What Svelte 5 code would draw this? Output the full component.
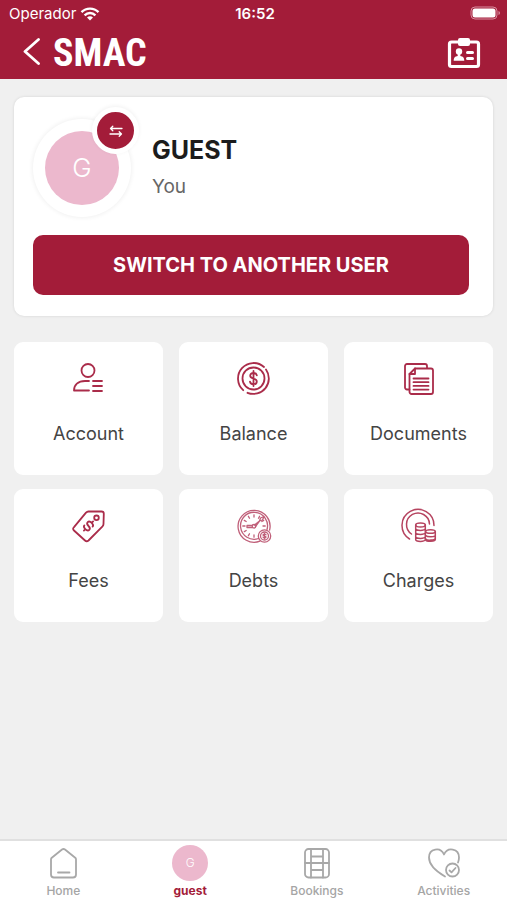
<script lang="ts">
    let user = { name: 'GUEST', relation: 'You', initial: 'G' };

    const options = ['Account', 'Balance', 'Documents', 'Fees', 'Debts', 'Charges'];

    const tabs = [
        { id: 'home', label: 'Home' },
        { id: 'user', label: 'guest' },
        { id: 'bookings', label: 'Bookings' },
        { id: 'activities', label: 'Activities' }
    ];

    let activeTab = 'user';

    // clock hour marks for the debts icon
    const marks = [0, 30, 60, 90, 180, 210, 240, 270, 300, 330];
</script>

<div class="screen">
    <header>
        <div class="status">
            <div class="carrier">
                <span>Operador</span>
                <svg width="20" height="14" viewBox="0 0 20 14" fill="none" stroke="#fff" stroke-width="2.4">
                    <path d="M1.5 5.2C6.3.4 13.7.4 18.5 5.2"/>
                    <path d="M4.6 8.3c3.1-3 7.7-3 10.8 0"/>
                    <path d="M7 10.4c1.8-1.6 4.2-1.6 6 0L10 13.6z" fill="#fff" stroke="none"/>
                </svg>
            </div>
            <span class="time">16:52</span>
            <div class="battery">
                <svg width="31" height="15" viewBox="0 0 31 15">
                    <rect x="1" y="1" width="26" height="12" rx="4" fill="none" stroke="#d98da0"/>
                    <rect x="2.5" y="2.5" width="23" height="9" rx="2.5" fill="#fff"/>
                    <path d="M28.5 5v4c2-.8 2-3.2 0-4z" fill="#d98da0"/>
                </svg>
            </div>
        </div>
        <div class="navbar">
            <button type="button" class="icon-button" aria-label="Back">
                <svg width="18" height="30" viewBox="0 0 18 30" fill="none" stroke="#fff" stroke-width="2.8" stroke-linecap="round" stroke-linejoin="round">
                    <path d="M15.5 1.5L2 13.5l13.500 12"/>
                </svg>
            </button>
            <span class="logo">SMAC</span>
            <button type="button" class="icon-button card-button" aria-label="Member card">
                <svg width="34" height="32" viewBox="0 0 34 32">
                    <rect x="2.5" y="5" width="29" height="24.5" rx="2" fill="none" stroke="#fff" stroke-width="3.2"/>
                    <rect x="11" y="1" width="12" height="8" rx="2" fill="#fff"/>
                    <circle cx="12" cy="14.5" r="3.2" fill="#fff"/>
                    <path d="M10.700 16h2.600v3c2.600.4 4 1.400 4 4.800H6.700c0-3.400 1.400-4.400 4-4.800z" fill="#fff"/>
                    <path d="M20.5 15.5h5M20.5 21.500h5" stroke="#fff" stroke-width="3" stroke-linecap="round"/>
                </svg>
            </button>
        </div>
    </header>

    <main>
        <section class="profile">
            <div class="who">
                <div class="ring">
                    <div class="avatar">{user.initial}</div>
                    <button type="button" class="swap" aria-label="Switch user">
                        <svg width="14" height="14" viewBox="0 0 14 14" fill="none" stroke="#fff" stroke-width="1.3" stroke-linecap="round" stroke-linejoin="round">
                            <path d="M13 4.500H1.500M3.800 2.200L1.500 4.500l2.300 2.300"/>
                            <path d="M1 10h11.500M10.200 7.700l2.300 2.300-2.300 2.300"/>
                        </svg>
                    </button>
                </div>
                <div>
                    <h1>{user.name}</h1>
                    <p>{user.relation}</p>
                </div>
            </div>
            <button type="button" class="switch">SWITCH TO ANOTHER USER</button>
        </section>

        <section class="options">
            {#each options as option}
                <button type="button" class="option">
                    <svg class="icon" viewBox="0 0 36 36">
                        {#if option == 'Account'}
                            <circle cx="17" cy="9.500" r="6.500"/>
                            <path d="M18 20h-4C7 20 3 24 3 29.500h15"/>
                            <path d="M22 20h9M22 25h9M22 30h9"/>
                        {:else if option == 'Balance'}
                            <circle cx="17.500" cy="17.500" r="11"/>
                            <path d="M7.200 29.200A15.500 15.500 0 0 1 28 6"/>
                            <path d="M30 8.500A15.500 15.500 0 0 1 11.500 31.800"/>
                            <path d="M20.800 14.300c-.4-1.600-1.600-2.300-3.300-2.300-2 0-3.300 1.100-3.300 2.800 0 3.800 6.600 1.900 6.600 5.600 0 1.700-1.300 2.800-3.300 2.800s-3.300-.9-3.500-2.600M17.500 10v15"/>
                        {:else if option == 'Documents'}
                            <path d="M8.500 28.500H6a2 2 0 0 1-2-2V5a2 2 0 0 1 2-2h18a2 2 0 0 1 2 2v2"/>
                            <path d="M14 7.500h16a2 2 0 0 1 2 2V31a2 2 0 0 1-2 2H10.500a2 2 0 0 1-2-2V13z"/>
                            <path d="M14 7.500V13H8.500"/>
                            <path d="M12.500 17.500h15M12.500 21.200h15M12.500 24.900h15M12.500 28.600h15"/>
                        {:else if option == 'Fees'}
                            <path d="M17.500 3.500h13q2.300 0 2.300 2.300L32.500 16q0 1.500-1.200 2.600L17.500 32.500q-1.800 1.600-3.500 0L3 22.500q-1.800-1.700 0-3.400L15 4.600q1-1 2.500-1.100z"/>
                            <circle cx="25.500" cy="9.800" r="2.300"/>
                            <g transform="rotate(45 17.500 18)">
                                <path d="M20.800 15.500q0-2-3.300-2t-3.300 2.300q0 2.200 3.300 2.200t3.300 2.200q0 2.300-3.300 2.300t-3.300-2M17.500 13.500v-2M17.500 22.500v2"/>
                            </g>
                        {:else if option == 'Debts'}
                            <g class="thin">
                                <path d="M24 33.200A16 16 0 1 1 33.600 22.200"/>
                                <path d="M22.500 30.500A13.500 13.500 0 1 1 31 21.500"/>
                                {#each marks as angle}
                                    <path d="M18 6.800v2.200" transform="rotate({angle} 18 18)"/>
                                {/each}
                                <path d="M18.500 17l5-4 1-3 3.500-1.500-1.500 3.500-3 1-4 5.500M16.500 17.500H11v2h5.500"/>
                                <circle cx="18" cy="18.300" r="1.800"/>
                                <circle cx="28.500" cy="28" r="6.200"/>
                                <circle cx="28.500" cy="28" r="4"/>
                                <path d="M30 26.800c-.5-1-3-1-3 .2 0 1.300 3 .7 3 2s-2.600 1.200-3 .1M28.500 25.300v5.400"/>
                            </g>
                        {:else}
                            <g class="mid">
                                <path d="M8.500 31A16 16 0 1 1 33 17.500"/>
                                <path d="M10.500 26A11.500 11.500 0 1 1 28.500 16"/>
                                <ellipse cx="19.500" cy="17" rx="4.800" ry="2"/>
                                <path d="M14.700 17v14.500c0 2.500 9.600 2.500 9.600 0V17M14.700 20.500c0 2.500 9.600 2.500 9.600 0M14.700 24.500c0 2.500 9.600 2.500 9.600 0M14.700 28.500c0 2.500 9.600 2.500 9.600 0"/>
                                <ellipse cx="29.500" cy="23.500" rx="4.800" ry="1.800"/>
                                <path d="M34.300 23.500v8c0 2.200-8.500 2.400-9.600.5M24.700 27.500c1.500 2 9.600 1.700 9.600-.2M24.700 31c1.500 2 9.600 1.200 9.600-.7"/>
                            </g>
                        {/if}
                    </svg>
                    <span>{option}</span>
                </button>
            {/each}
        </section>
    </main>

    <nav>
        {#each tabs as tab}
            <a href="#{tab.id}" class:active={tab.id == activeTab}>
                {#if tab.id == 'user'}
                    <span class="mini">{user.initial}</span>
                {:else}
                    <svg class="tab-icon" viewBox="0 0 36 36">
                        {#if tab.id == 'home'}
                            <path d="M6.500 13L17 4.500q1.500-1 3 0L30.500 13q.5.500.5 1.500V29.500q0 3-3 3H9q-3 0-3-3v-15q0-1 .5-1.500z"/>
                            <path d="M13 27.500h11.500"/>
                        {:else if tab.id == 'bookings'}
                            <rect x="6" y="4" width="24" height="28.500" rx="3.500"/>
                            <path d="M12 4v28.500M24 4v28.500M6 18h24M12 11.500h12M12 25h12"/>
                        {:else}
                            <path d="M19 31.500C13 28 3 20.500 3 12.500 3 3.500 14.500 1.500 18 9.500 21.500 1.500 33 3.500 33 12.500q0 2.500-1 5"/>
                            <circle cx="26.500" cy="25" r="6.500"/>
                            <path d="M23.500 25.500l2 1.800 4-4.300"/>
                        {/if}
                    </svg>
                {/if}
                <span>{tab.label}</span>
            </a>
        {/each}
    </nav>
</div>

<style>
    :global(body){
        margin:0;
        background:#f0f0f0;
    }

    .screen{
        min-height:100vh;
        display:flex;
        flex-direction:column;
        font-family:Inter, "Open Sans", sans-serif;
    }

    button{
        font-family:inherit;
        border:none;
        padding:0;
        cursor:pointer;
    }

    svg{
        display:block;
    }

    header{
        background:#a31c39;
        color:white;
    }

    .status{
        display:grid;
        grid-template-columns:1fr auto 1fr;
        align-items:center;
        height:27px;
        padding:0 6px 0 9px;
        font-size:15px;
    }

    .carrier{
        display:flex;
        align-items:center;
        gap:4px;
    }

    .time{
        font-weight:600;
    }

    .battery{
        display:flex;
        justify-content:flex-end;
    }

    .navbar{
        display:flex;
        align-items:center;
        height:52px;
        padding:0 26px 0 23px;
    }

    .icon-button{
        background:transparent;
    }

    .card-button{
        margin-left:auto;
    }

    .logo{
        margin-left:12px;
        font-family:"Roboto Condensed", "Liberation Sans Narrow", "Liberation Sans", sans-serif;
        font-size:38px;
        line-height:48px;
        font-weight:bold;
    }

    main{
        flex:1;
        padding:18px 14px;
    }

    .profile{
        padding:22px 24px 21px 19px;
        background:white;
        border-radius:10px;
        box-shadow:0 0 3px rgba(0,0,0,0.12);
    }

    .who{
        display:flex;
        align-items:center;
        gap:21px;
        margin-bottom:18px;
    }

    .ring{
        position:relative;
        display:flex;
        align-items:center;
        justify-content:center;
        width:98px;
        height:98px;
        border-radius:50%;
        box-shadow:0 0 4px 1px rgba(0,0,0,0.06);
    }

    .avatar{
        width:74px;
        height:74px;
        border-radius:50%;
        background:#ecb8cd;
        color:white;
        font-size:26px;
        font-weight:300;
        line-height:74px;
        text-align:center;
    }

    .swap{
        position:absolute;
        top:-12px;
        right:-8px;
        display:flex;
        align-items:center;
        justify-content:center;
        width:47px;
        height:47px;
        border:5px solid white;
        border-radius:50%;
        background:#a31c39;
        box-shadow:0 -1px 4px rgba(0,0,0,0.06);
    }

    h1{
        margin:0;
        color:#1c1c1c;
        font-size:25px;
        line-height:38px;
        font-weight:700;
    }

    p{
        margin:0;
        color:#666;
        font-size:19px;
        line-height:36px;
    }

    .switch{
        display:block;
        width:100%;
        height:60px;
        border-radius:10px;
        background:#a31c39;
        color:white;
        font-size:20px;
        font-weight:700;
    }

    .options{
        display:grid;
        grid-template-columns:repeat(3, 1fr);
        gap:14px 16px;
        margin-top:26px;
    }

    .option{
        display:flex;
        flex-direction:column;
        align-items:center;
        gap:24px;
        height:133px;
        padding-top:19px;
        border-radius:9px;
        background:white;
        color:#444;
        font-size:18px;
        line-height:26px;
    }

    .icon{
        width:36px;
        height:36px;
        fill:none;
        stroke:#aa2c4a;
        stroke-width:1.8;
        stroke-linecap:round;
        stroke-linejoin:round;
    }

    .thin{
        stroke:#c0607a;
        stroke-width:1.3;
    }

    .mid{
        stroke:#b64460;
        stroke-width:1.5;
    }

    nav{
        display:grid;
        grid-template-columns:repeat(4, 1fr);
        height:59px;
        border-top:2px solid #e0e0e0;
        background:white;
    }

    nav a{
        display:flex;
        flex-direction:column;
        align-items:center;
        gap:2px;
        padding-top:4px;
        color:#a5a5a5;
        font-size:12px;
        line-height:16px;
        font-weight:500;
        text-decoration:none;
    }

    nav a.active{
        color:#a31c39;
        font-weight:700;
    }

    .tab-icon{
        width:36px;
        height:36px;
        fill:none;
        stroke:#a8a8a8;
        stroke-width:1.8;
        stroke-linecap:round;
        stroke-linejoin:round;
    }

    .mini{
        width:36px;
        height:36px;
        border-radius:50%;
        background:#ecb8cd;
        color:white;
        font-weight:300;
        line-height:36px;
        text-align:center;
    }
</style>
